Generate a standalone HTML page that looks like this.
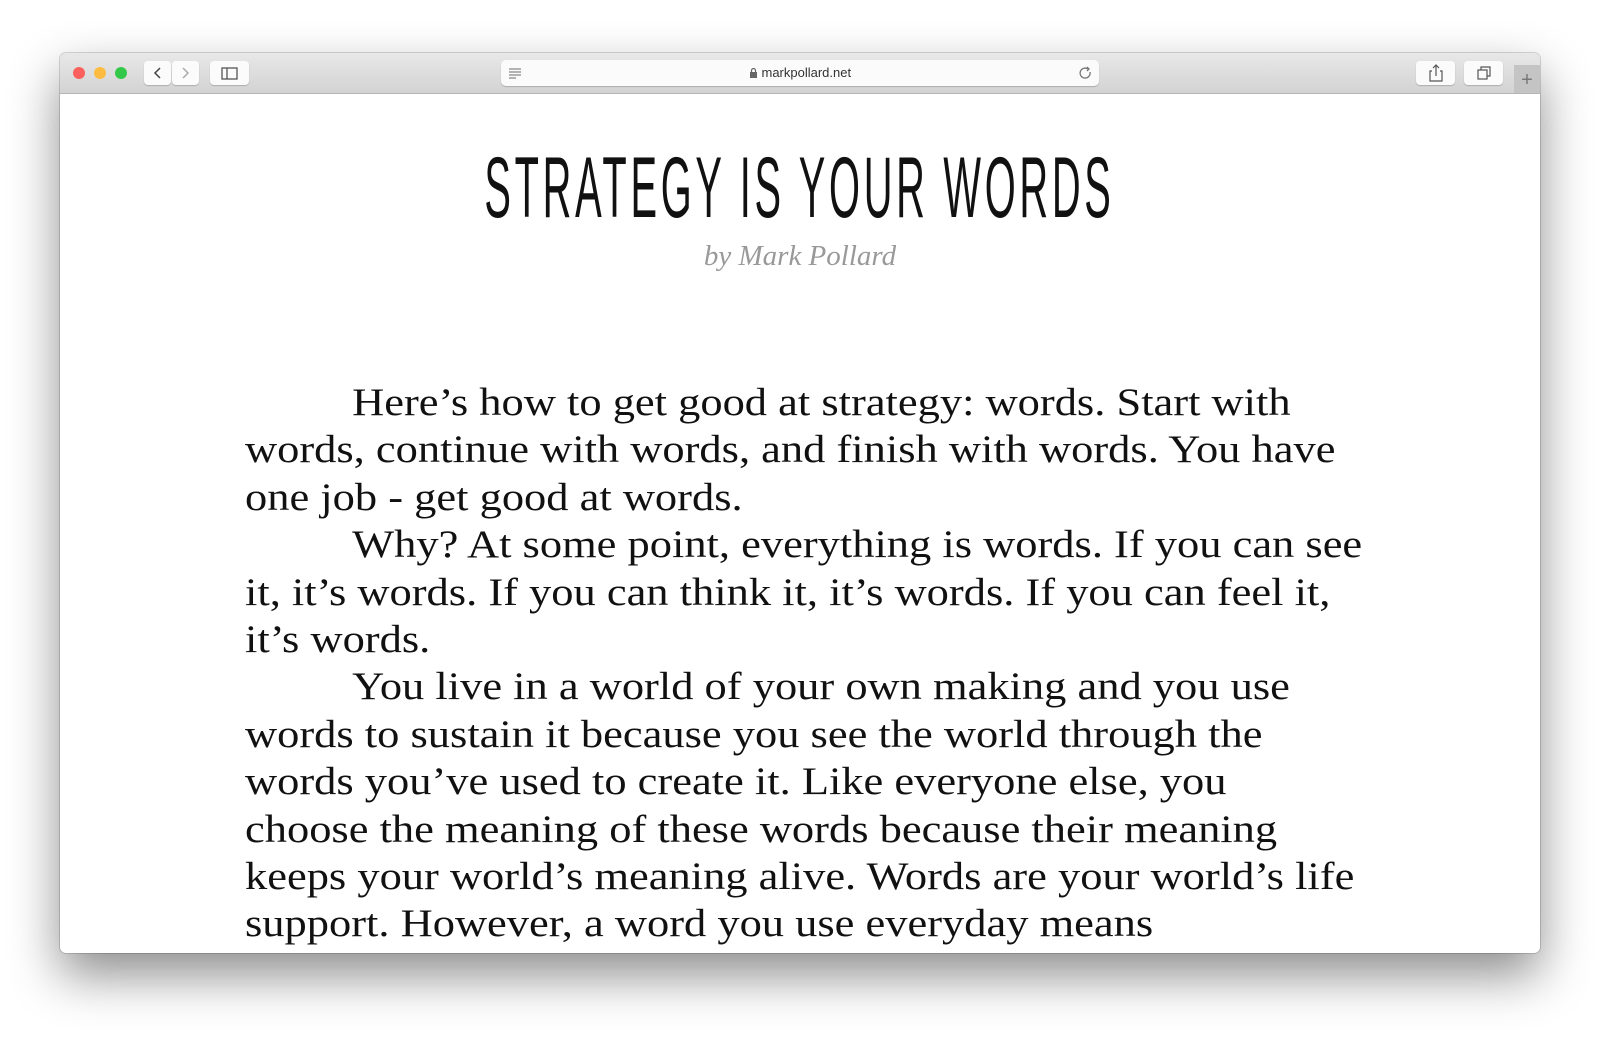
<!DOCTYPE html>
<html><head><meta charset="utf-8"><style>
html,body{margin:0;padding:0;width:1600px;height:1042px;background:#fff;overflow:hidden;font-family:"Liberation Sans",sans-serif}
.win{position:absolute;left:60px;top:53px;width:1480px;height:900px;background:#fff;border-radius:6px;box-shadow:0 22px 50px rgba(0,0,0,.45),0 0 0 1px rgba(0,0,0,.15);overflow:hidden}
.bar{position:absolute;left:0;top:0;width:1480px;height:40px;background:linear-gradient(#e8e8e8,#d3d3d3);border-bottom:1px solid #b5b5b5}
.dot{position:absolute;top:14px;width:12px;height:12px;border-radius:50%}
.btn{position:absolute;top:8px;height:24px;background:#fbfbfb;border-radius:4px;box-shadow:0 1px 1px rgba(0,0,0,.2)}
.addr{position:absolute;left:441px;top:7px;width:598px;height:26px;background:#fbfbfb;border-radius:5px;box-shadow:0 1px 1px rgba(0,0,0,.2);font-size:13px;color:#333;text-align:center;line-height:26px}
.title{position:absolute;left:0;width:1480px;top:92px;text-align:center;font-family:"Liberation Sans Narrow","Liberation Sans",sans-serif;font-weight:normal;font-size:86px;letter-spacing:8px;color:#111;transform:scaleX(.463);transform-origin:739px 0;line-height:1}
.by{position:absolute;left:0;width:1480px;top:188px;text-align:center;font-family:"Liberation Serif",serif;font-style:italic;font-size:29px;color:#999;line-height:30px}
.body{position:absolute;left:185px;top:326px;font-family:"Liberation Serif",serif;font-size:39px;line-height:47.4px;color:#111;white-space:nowrap;transform:scaleX(1.14);transform-origin:0 0}
.body span{display:block}
.in{padding-left:94px}
</style></head><body>
<div class="win">
 <div class="bar">
  <div class="dot" style="left:13px;background:#fc605c"></div>
  <div class="dot" style="left:34px;background:#fdbc40"></div>
  <div class="dot" style="left:55px;background:#34c84a"></div>
  <div class="btn" style="left:84px;width:27px"><svg width="27" height="24"><path d="M16 7l-5 5 5 5" fill="none" stroke="#444" stroke-width="1.5"/></svg></div>
  <div class="btn" style="left:112px;width:27px"><svg width="27" height="24"><path d="M11 7l5 5-5 5" fill="none" stroke="#aaa" stroke-width="1.5"/></svg></div>
  <div class="btn" style="left:150px;width:39px"><svg width="39" height="24"><rect x="12" y="7" width="15" height="11" fill="none" stroke="#555" stroke-width="1.3"/><line x1="17" y1="7" x2="17" y2="18" stroke="#555" stroke-width="1.3"/></svg></div>
  <div class="addr"><svg style="position:absolute;left:6px;top:6px" width="16" height="14"><path d="M2 3h12M2 6h12M2 9h12M2 12h7" stroke="#888" stroke-width="1.2"/></svg><svg width="9" height="10" style="vertical-align:-1px"><rect x="1" y="4" width="7" height="6" fill="#666"/><path d="M2.5 4V2.5a2 2 0 0 1 4 0V4" fill="none" stroke="#666" stroke-width="1.2"/></svg> markpollard.net<svg style="position:absolute;right:6px;top:6px" width="14" height="14"><path d="M11 6a5 5 0 1 1-2-3" fill="none" stroke="#777" stroke-width="1.3"/><path d="M8 1l2 2-2 2" fill="none" stroke="#777" stroke-width="1.3"/></svg></div>
  <div class="btn" style="left:1356px;width:39px"><svg width="39" height="24"><path d="M16 10h-2v10h12v-10h-2M20 15V4M17 7l3-3 3 3" fill="none" stroke="#555" stroke-width="1.2"/></svg></div>
  <div class="btn" style="left:1404px;width:39px"><svg width="39" height="24"><rect x="14" y="9" width="9" height="9" fill="none" stroke="#555" stroke-width="1.2"/><path d="M17 9V6h9v9h-3" fill="none" stroke="#555" stroke-width="1.2"/></svg></div>
  <div style="position:absolute;left:1454px;top:12px;width:26px;height:28px;background:#c4c4c4;color:#777;font-size:20px;text-align:center;line-height:30px">+</div>
 </div>
 <div class="title">STRATEGY IS YOUR WORDS</div>
 <div class="by">by Mark Pollard</div>
 <div class="body">
  <span class="in">Here’s how to get good at strategy: words. Start with</span>
  <span>words, continue with words, and finish with words. You have</span>
  <span>one job - get good at words.</span>
  <span class="in">Why? At some point, everything is words. If you can see</span>
  <span>it, it’s words. If you can think it, it’s words. If you can feel it,</span>
  <span>it’s words.</span>
  <span class="in">You live in a world of your own making and you use</span>
  <span>words to sustain it because you see the world through the</span>
  <span>words you’ve used to create it. Like everyone else, you</span>
  <span>choose the meaning of these words because their meaning</span>
  <span>keeps your world’s meaning alive. Words are your world’s life</span>
  <span>support. However, a word you use everyday means</span>
 </div>
</div>
</body></html>
